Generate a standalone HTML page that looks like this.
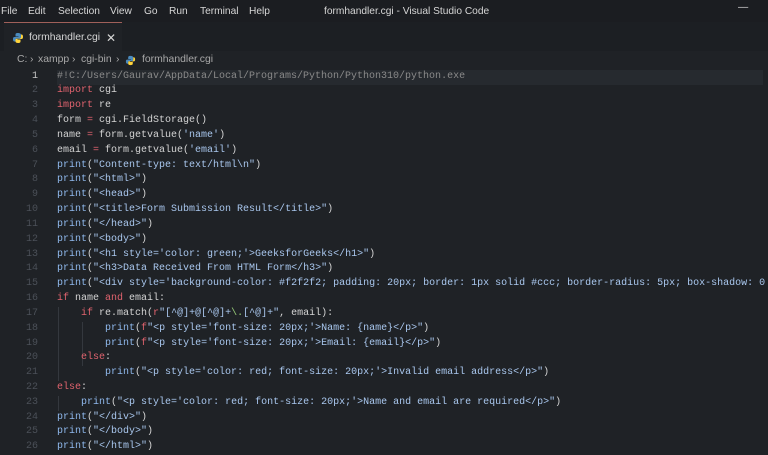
<!DOCTYPE html>
<html><head><style>
body{margin:0;width:768px;height:445px;overflow:hidden;background:#1f2226;font-family:"Liberation Sans",sans-serif;}
.menu{position:absolute;left:0;top:0;width:768px;height:22px;background:#1b1d21;color:#d6d6d6;font-size:10.2px;}
.menu span{position:absolute;top:6px;}
.tabs{position:absolute;top:22px;left:0;width:768px;height:29px;background:#1c1f23;}
.tab{position:absolute;left:4px;top:0;width:118px;height:29px;background:#1f2226;border-top:1px solid #a0605a;color:#d6d6d6;font-size:10.4px;}
.crumb{position:absolute;top:54px;left:0;color:#a8a8a8;font-size:10.4px;}
.crumb span,.crumb svg{position:absolute;top:0;white-space:nowrap;}
.code{position:absolute;left:0;top:69.6px;width:768px;font-family:"Liberation Mono",monospace;font-size:10px;}
.l{height:14.83px;line-height:14.83px;white-space:pre;position:relative;}
.n{position:absolute;left:0;width:38px;text-align:right;color:#4b5058;}
.t{position:absolute;left:57px;color:#d4d4d4;}
.k{color:#e0636e}.b{color:#8fb8ec}.s{color:#a9c7ee}.g{color:#9ad07a}.c{color:#8a8a8a}
.guide{position:absolute;width:1px;background:#34383e;}
</style></head><body>
<div class="menu"><span style="left:1px">File</span><span style="left:28px">Edit</span><span style="left:58px">Selection</span><span style="left:110px">View</span><span style="left:144px">Go</span><span style="left:169px">Run</span><span style="left:200px">Terminal</span><span style="left:249px">Help</span><span style="left:324px">formhandler.cgi - Visual Studio Code</span><span style="left:738px;top:2px">—</span></div>
<div class="tabs"><div class="tab">
<svg style="position:absolute;left:8px;top:9px" width="12" height="12" viewBox="0 0 12 12"><path d="M6 1C3.5 1 3.5 2 3.5 3V4.5H6.5V5H2.5C1 5 1 6.5 1 7.5S1.5 9.5 2.5 9.5H3.5V8C3.5 7 4.3 6.5 5 6.5H8C8.7 6.5 9 6 9 5.5V3C9 1.5 7.5 1 6 1Z" fill="#4b8bbe"/><path d="M6 11C8.5 11 8.5 10 8.5 9V7.5H5.5V7H9.5C11 7 11 5.5 11 4.5S10.5 2.5 9.5 2.5H9V5C9 6 8.2 6.8 7.5 6.8H4.5C3.8 6.8 3.5 7.3 3.5 8V9.5C3.5 10.5 4.5 11 6 11Z" fill="#ffd43b"/></svg>
<span style="position:absolute;left:25px;top:9px">formhandler.cgi</span><span style="position:absolute;left:102px;top:8px;font-size:12px">✕</span></div></div>
<div class="crumb"><span style="left:17px">C:</span><span style="left:30px">›</span><span style="left:38px">xampp</span><span style="left:72px">›</span><span style="left:81px">cgi-bin</span><span style="left:116px">›</span><svg style="left:125px;top:1px" width="11" height="11" viewBox="0 0 12 12"><path d="M6 1C3.5 1 3.5 2 3.5 3V4.5H6.5V5H2.5C1 5 1 6.5 1 7.5S1.5 9.5 2.5 9.5H3.5V8C3.5 7 4.3 6.5 5 6.5H8C8.7 6.5 9 6 9 5.5V3C9 1.5 7.5 1 6 1Z" fill="#4b8bbe"/><path d="M6 11C8.5 11 8.5 10 8.5 9V7.5H5.5V7H9.5C11 7 11 5.5 11 4.5S10.5 2.5 9.5 2.5H9V5C9 6 8.2 6.8 7.5 6.8H4.5C3.8 6.8 3.5 7.3 3.5 8V9.5C3.5 10.5 4.5 11 6 11Z" fill="#ffd43b"/></svg><span style="left:142px">formhandler.cgi</span></div>
<div style="position:absolute;left:57px;top:69.6px;width:706px;height:15px;background:#262a2f"></div>
<div class="guide" style="left:58px;top:307px;height:74px"></div>
<div class="guide" style="left:82px;top:322px;height:44px"></div>
<div class="guide" style="left:58px;top:396px;height:15px"></div>
<div class="code">
<div class="l"><span class="n" style="color:#c8c8c8">1</span><span class="t c">#!C:/Users/Gaurav/AppData/Local/Programs/Python/Python310/python.exe</span></div>
<div class="l"><span class="n">2</span><span class="t"><span class="k">import</span> cgi</span></div>
<div class="l"><span class="n">3</span><span class="t"><span class="k">import</span> re</span></div>
<div class="l"><span class="n">4</span><span class="t">form <span class="k">=</span> cgi.FieldStorage()</span></div>
<div class="l"><span class="n">5</span><span class="t">name <span class="k">=</span> form.getvalue(<span class="s">'name'</span>)</span></div>
<div class="l"><span class="n">6</span><span class="t">email <span class="k">=</span> form.getvalue(<span class="s">'email'</span>)</span></div>
<div class="l"><span class="n">7</span><span class="t"><span class="b">print</span>(<span class="s">"Content-type: text/html\n"</span>)</span></div>
<div class="l"><span class="n">8</span><span class="t"><span class="b">print</span>(<span class="s">"&lt;html&gt;"</span>)</span></div>
<div class="l"><span class="n">9</span><span class="t"><span class="b">print</span>(<span class="s">"&lt;head&gt;"</span>)</span></div>
<div class="l"><span class="n">10</span><span class="t"><span class="b">print</span>(<span class="s">"&lt;title&gt;Form Submission Result&lt;/title&gt;"</span>)</span></div>
<div class="l"><span class="n">11</span><span class="t"><span class="b">print</span>(<span class="s">"&lt;/head&gt;"</span>)</span></div>
<div class="l"><span class="n">12</span><span class="t"><span class="b">print</span>(<span class="s">"&lt;body&gt;"</span>)</span></div>
<div class="l"><span class="n">13</span><span class="t"><span class="b">print</span>(<span class="s">"&lt;h1 style='color: green;'&gt;GeeksforGeeks&lt;/h1&gt;"</span>)</span></div>
<div class="l"><span class="n">14</span><span class="t"><span class="b">print</span>(<span class="s">"&lt;h3&gt;Data Received From HTML Form&lt;/h3&gt;"</span>)</span></div>
<div class="l"><span class="n">15</span><span class="t"><span class="b">print</span>(<span class="s">"&lt;div style='background-color: #f2f2f2; padding: 20px; border: 1px solid #ccc; border-radius: 5px; box-shadow: 0</span></span></div>
<div class="l"><span class="n">16</span><span class="t"><span class="k">if</span> name <span class="k">and</span> email:</span></div>
<div class="l"><span class="n">17</span><span class="t">    <span class="k">if</span> re.match(<span class="k">r</span><span class="s">"[^@]+@[^@]+<span class="g">\.</span>[^@]+"</span>, email):</span></div>
<div class="l"><span class="n">18</span><span class="t">        <span class="b">print</span>(<span class="k">f</span><span class="s">"&lt;p style='font-size: 20px;'&gt;Name: {name}&lt;/p&gt;"</span>)</span></div>
<div class="l"><span class="n">19</span><span class="t">        <span class="b">print</span>(<span class="k">f</span><span class="s">"&lt;p style='font-size: 20px;'&gt;Email: {email}&lt;/p&gt;"</span>)</span></div>
<div class="l"><span class="n">20</span><span class="t">    <span class="k">else</span>:</span></div>
<div class="l"><span class="n">21</span><span class="t">        <span class="b">print</span>(<span class="s">"&lt;p style='color: red; font-size: 20px;'&gt;Invalid email address&lt;/p&gt;"</span>)</span></div>
<div class="l"><span class="n">22</span><span class="t"><span class="k">else</span>:</span></div>
<div class="l"><span class="n">23</span><span class="t">    <span class="b">print</span>(<span class="s">"&lt;p style='color: red; font-size: 20px;'&gt;Name and email are required&lt;/p&gt;"</span>)</span></div>
<div class="l"><span class="n">24</span><span class="t"><span class="b">print</span>(<span class="s">"&lt;/div&gt;"</span>)</span></div>
<div class="l"><span class="n">25</span><span class="t"><span class="b">print</span>(<span class="s">"&lt;/body&gt;"</span>)</span></div>
<div class="l"><span class="n">26</span><span class="t"><span class="b">print</span>(<span class="s">"&lt;/html&gt;"</span>)</span></div>
</div>
</body></html>
